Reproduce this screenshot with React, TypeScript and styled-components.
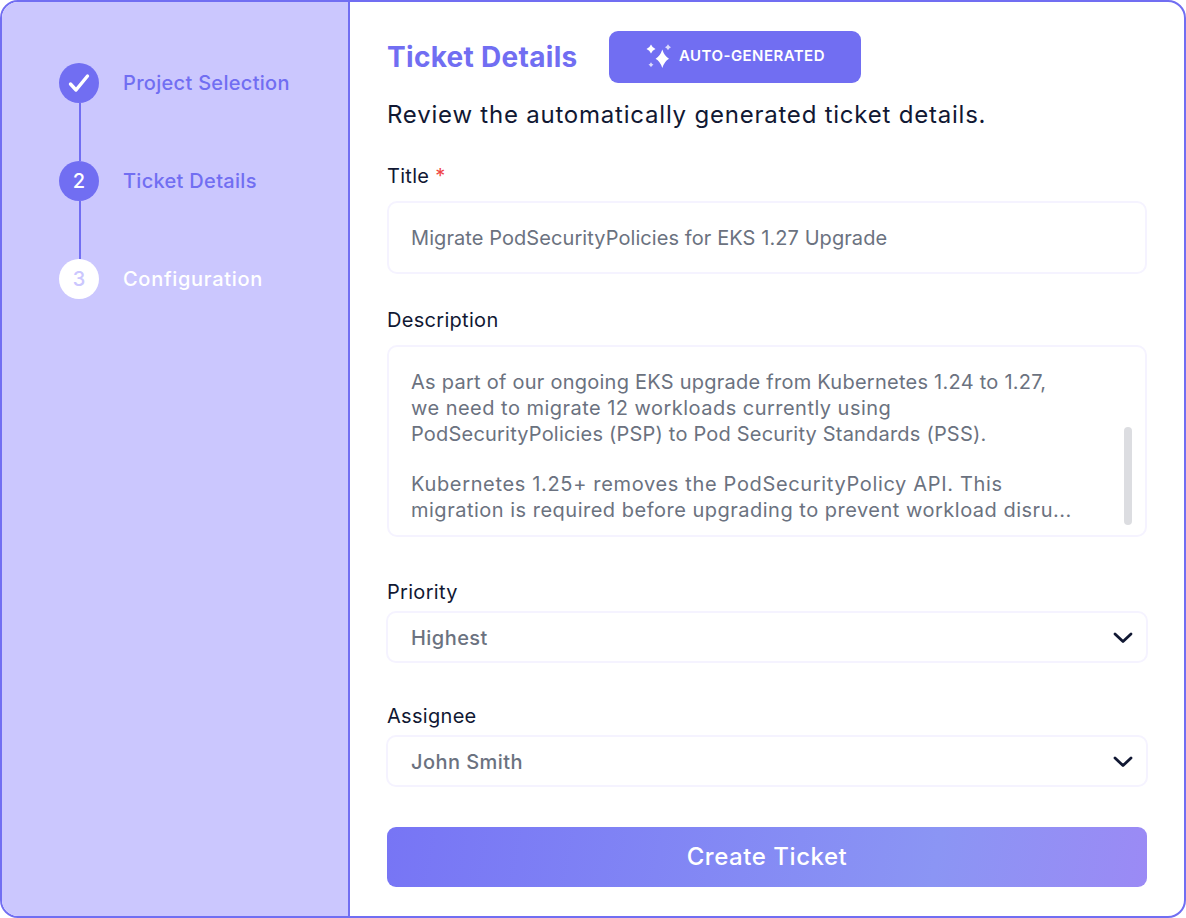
import React from "react";
import styled, { createGlobalStyle } from "styled-components";

const Global = createGlobalStyle`
  html, body { margin: 0; padding: 0; background: #fff; }
  * { box-sizing: border-box; }
  body { font-family: "Inter", "Open Sans", sans-serif; color: #111833; }
`;

const Frame = styled.div`
  width: 1186px;
  height: 918px;
  display: flex;
  border: 2px solid #716ef2;
  border-radius: 18px;
  overflow: hidden;
  background: #fff;
`;

const Sidebar = styled.aside`
  width: 348px;
  flex: none;
  background: #cbc7fe;
  border-right: 2px solid #716ef2;
  padding: 61px 0 0 57px;
  display: flex;
  flex-direction: column;
`;

const Step = styled.div<{ $last?: boolean }>`
  display: flex;
  gap: 24px;
  height: ${p => (p.$last ? 40 : 98)}px;
  position: relative;
`;

const Connector = styled.span`
  position: absolute;
  left: 20px;
  top: 40px;
  width: 2px;
  height: 58px;
  background: #716ef2;
`;

const Circle = styled.span<{ $todo?: boolean }>`
  width: 40px;
  height: 40px;
  border-radius: 50%;
  flex: none;
  display: flex;
  align-items: center;
  justify-content: center;
  background: ${p => (p.$todo ? "#fff" : "#716ef2")};
  color: ${p => (p.$todo ? "#cbc7fe" : "#fff")};
  font-size: 20px;
  font-weight: 500;
`;

const StepLabel = styled.span<{ $todo?: boolean }>`
  font-size: 20px;
  font-weight: 500;
  line-height: 40px;
  letter-spacing: ${p => (p.$todo ? 0.7 : 0.3)}px;
  color: ${p => (p.$todo ? "#fff" : "#716ef2")};
`;

const Main = styled.main`
  flex: 1;
  padding: 29px 37px 0;
  display: flex;
  flex-direction: column;
`;

const Header = styled.div`
  display: flex;
  align-items: center;
  gap: 32px;
  height: 52px;
`;

const Heading = styled.h1`
  margin: 0;
  width: 190px;
  white-space: nowrap;
  font-size: 28px;
  line-height: 52px;
  font-weight: 700;
  letter-spacing: 0.3px;
  color: #716ef2;
`;

const Badge = styled.div`
  width: 252px;
  height: 52px;
  border-radius: 9px;
  background: #716ef2;
  color: #fff;
  display: flex;
  align-items: center;
  justify-content: center;
  gap: 8px;
  font-size: 15px;
  font-weight: 600;
  letter-spacing: 0.45px;
  padding-bottom: 4px;
`;

const Subtitle = styled.p`
  margin: 18px 0 0;
  font-size: 24px;
  line-height: 28px;
  font-weight: 400;
  letter-spacing: 0.78px;
  color: #111833;
  white-space: nowrap;
`;

const Label = styled.label`
  display: block;
  font-size: 20px;
  line-height: 26px;
  font-weight: 400;
  letter-spacing: 0.3px;
  color: #111833;
`;

const Required = styled.span`
  color: #ef4444;
`;

const Field = styled.div<{ $top: number }>`
  margin-top: ${p => p.$top}px;
`;

const TitleBox = styled.div`
  margin-top: 12px;
  height: 73px;
  border: 2px solid #f5f3ff;
  border-radius: 10px;
  padding: 0 22px;
  display: flex;
  align-items: center;
  font-size: 20px;
  letter-spacing: 0.08px;
  color: #6b7280;
`;

const DescBox = styled.div`
  margin-top: 12px;
  height: 192px;
  border: 2px solid #f5f3ff;
  border-radius: 10px;
  padding: 22px 22px 0;
  font-size: 20px;
  line-height: 26px;
  color: #6b7280;
  position: relative;
`;

const Para = styled.div`
  margin: 0 0 24px;
`;

const Line = styled.div<{ $spacing: number }>`
  white-space: nowrap;
  letter-spacing: ${p => p.$spacing}px;
`;

const Thumb = styled.span`
  position: absolute;
  left: 735px;
  top: 80px;
  width: 8px;
  height: 98px;
  border-radius: 4px;
  background: #dcdde1;
`;

const Select = styled.div`
  margin: 6px -1px 0;
  height: 52px;
  border: 2px solid #f5f3ff;
  border-radius: 10px;
  padding: 2px 13px 0 23px;
  display: flex;
  align-items: center;
  justify-content: space-between;
  font-size: 20px;
  font-weight: 500;
  letter-spacing: 0.45px;
  color: #6b7280;
`;

const CreateButton = styled.button`
  margin-top: 40px;
  height: 60px;
  width: 100%;
  border: 0;
  border-radius: 9px;
  background: linear-gradient(100deg, #7775f5 0%, #8b95f4 72%, #9b8af5 100%);
  color: #fff;
  font: 500 24px "Inter", sans-serif;
  letter-spacing: 0.55px;
  padding-bottom: 2px;
`;

const Chevron = () => (
  <svg width="20" height="20" viewBox="0 0 20 20" fill="none">
    <path d="M2 6l8 7.6L18 6" stroke="#111833" strokeWidth="2.8" strokeLinecap="round" strokeLinejoin="round" />
  </svg>
);

const Check = () => (
  <svg width="24" height="24" viewBox="0 0 24 24" fill="none">
    <path d="M3.5 13l5.500 6L20.500 5" stroke="#fff" strokeWidth="3.4" strokeLinecap="round" strokeLinejoin="round" />
  </svg>
);

const Sparkles = () => (
  <svg width="26" height="26" viewBox="0 0 26 26" fill="#fff">
    <path d="M17.3 7.600Q19.400 14.200 24 16.800Q19.400 19.400 17.300 26Q15.200 19.400 10.600 16.800Q15.200 14.200 17.300 7.600z" />
    <path d="M6 2.500Q7.300 5.700 10.500 7Q7.300 8.300 6 11.500Q4.700 8.300 1.500 7Q4.700 5.700 6 2.500z" />
    <path d="M23 2.300Q23.800 4.500 26 5.300Q23.800 6.100 23 8.300Q22.200 6.100 20 5.300Q22.200 4.500 23 2.300z" opacity=".75" />
    <path d="M6 20.200Q6.700 22 8.500 22.700Q6.700 23.400 6 25.200Q5.300 23.400 3.500 22.700Q5.300 22 6 20.200z" opacity=".75" />
  </svg>
);

export default function App() {
  return (
    <>
      <Global />
      <Frame>
        <Sidebar>
          <Step>
            <Circle><Check /></Circle>
            <Connector />
            <StepLabel>Project Selection</StepLabel>
          </Step>
          <Step>
            <Circle>2</Circle>
            <Connector />
            <StepLabel>Ticket Details</StepLabel>
          </Step>
          <Step $last>
            <Circle $todo>3</Circle>
            <StepLabel $todo>Configuration</StepLabel>
          </Step>
        </Sidebar>
        <Main>
          <Header>
            <Heading>Ticket Details</Heading>
            <Badge><Sparkles />AUTO-GENERATED</Badge>
          </Header>
          <Subtitle>Review the automatically generated ticket details.</Subtitle>
          <Field $top={34}>
            <Label>Title <Required>*</Required></Label>
            <TitleBox>Migrate PodSecurityPolicies for EKS 1.27 Upgrade</TitleBox>
          </Field>
          <Field $top={33}>
            <Label>Description</Label>
            <DescBox>
              <Para>
                <Line $spacing={0.25}>As part of our ongoing EKS upgrade from Kubernetes 1.24 to 1.27,</Line>
                <Line $spacing={0.47}>we need to migrate 12 workloads currently using</Line>
                <Line $spacing={0.2}>PodSecurityPolicies (PSP) to Pod Security Standards (PSS).</Line>
              </Para>
              <Para>
                <Line $spacing={0.66}>Kubernetes 1.25+ removes the PodSecurityPolicy API. This</Line>
                <Line $spacing={0.5}>migration is required before upgrading to prevent workload disru...</Line>
              </Para>
              <Thumb />
            </DescBox>
          </Field>
          <Field $top={42}>
            <Label>Priority</Label>
            <Select>Highest<Chevron /></Select>
          </Field>
          <Field $top={40}>
            <Label>Assignee</Label>
            <Select>John Smith<Chevron /></Select>
          </Field>
          <CreateButton>Create Ticket</CreateButton>
        </Main>
      </Frame>
    </>
  );
}
